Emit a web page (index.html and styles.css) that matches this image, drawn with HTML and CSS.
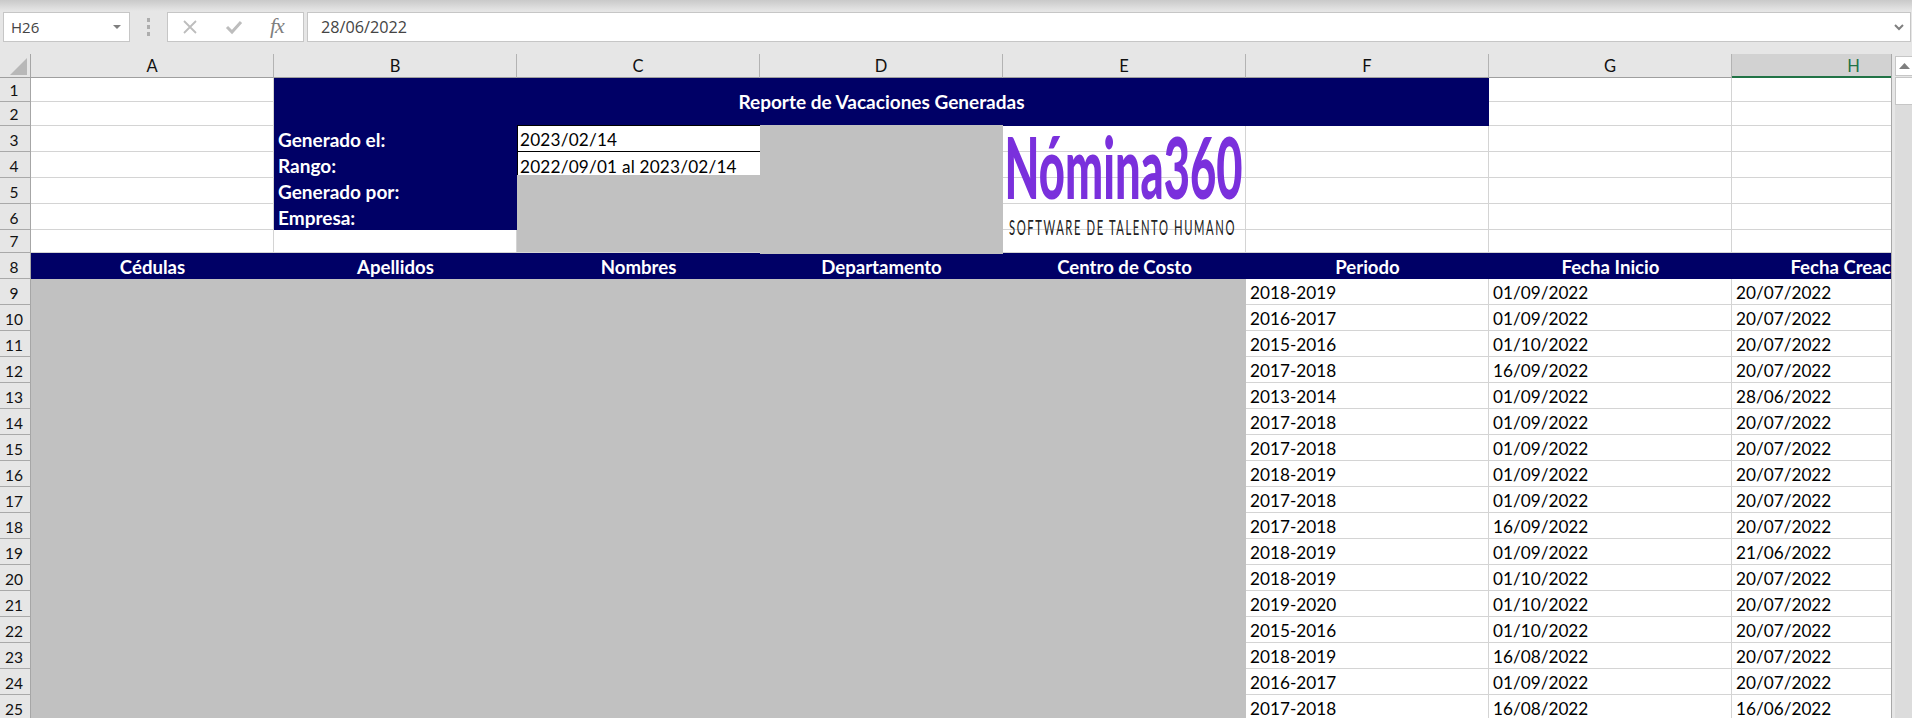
FILE: index.html
```html
<!DOCTYPE html>
<html lang="es">
<head>
<meta charset="utf-8">
<title>Reporte de Vacaciones Generadas</title>
<link rel="stylesheet" href="styles.css">
</head>
<body>
<div class="app">
  <div class="formula-bar">
    <div class="name-box"><span>H26</span>
      <svg class="caret" width="8" height="4" viewBox="0 0 8 4"><path d="M0 0h8L4 4z"/></svg>
    </div>
    <div class="grip"><i></i><i></i><i></i></div>
    <div class="fx-box">
      <svg class="ic" width="16" height="16" viewBox="0 0 16 16"><path d="M2 2l12 12M14 2L2 14"/></svg>
      <svg class="ic" width="18" height="16" viewBox="0 0 18 16"><path class="thick" d="M2 8l5 5L16 3"/></svg>
      <span class="fx">fx</span>
    </div>
    <div class="input-box"><span>28/06/2022</span>
      <svg class="chev" width="10" height="7" viewBox="0 0 10 7"><path d="M1 1l4 4 4-4"/></svg>
    </div>
  </div>
  <div class="workspace">
    <div class="viewport">
      <div class="sheet">
        <div class="corner"><svg width="17" height="17" viewBox="0 0 17 17"><path d="M17 0v17H0z"/></svg></div>
        <div class="ch">A</div><div class="ch">B</div><div class="ch">C</div><div class="ch">D</div><div class="ch">E</div><div class="ch">F</div><div class="ch">G</div><div class="ch ch-on"><span>H</span></div>

        <div class="rh">1</div><div class="c"></div><div class="c title">Reporte de Vacaciones Generadas</div><div class="c"></div><div class="c"></div>
        <div class="rh">2</div><div class="c"></div><div class="c"></div><div class="c"></div>

        <div class="rh">3</div><div class="c"></div><div class="c label">Generado el:</div><div class="c val val-top">2023/02/14</div><div class="c"></div><div class="c"></div><div class="c"></div><div class="c"></div><div class="c"></div>
        <div class="rh">4</div><div class="c"></div><div class="c label">Rango:</div><div class="c val">2022/09/01 al 2023/02/14</div><div class="c"></div><div class="c"></div><div class="c"></div><div class="c"></div><div class="c"></div>
        <div class="rh">5</div><div class="c"></div><div class="c label">Generado por:</div><div class="c"></div><div class="c"></div><div class="c"></div><div class="c"></div><div class="c"></div><div class="c"></div>
        <div class="rh">6</div><div class="c"></div><div class="c label">Empresa:</div><div class="c"></div><div class="c"></div><div class="c"></div><div class="c"></div><div class="c"></div><div class="c"></div>
        <div class="rh">7</div><div class="c"></div><div class="c"></div><div class="c"></div><div class="c"></div><div class="c"></div><div class="c"></div><div class="c"></div><div class="c"></div>

        <div class="rh">8</div><div class="th">Cédulas</div><div class="th">Apellidos</div><div class="th">Nombres</div><div class="th">Departamento</div><div class="th">Centro de Costo</div><div class="th">Periodo</div><div class="th">Fecha Inicio</div><div class="th">Fecha Creación</div>

        <div class="rh">9</div><div class="redacted-main"></div><div class="c d">2018-2019</div><div class="c d">01/09/2022</div><div class="c d">20/07/2022</div>
        <div class="rh">10</div><div class="c d">2016-2017</div><div class="c d">01/09/2022</div><div class="c d">20/07/2022</div>
        <div class="rh">11</div><div class="c d">2015-2016</div><div class="c d">01/10/2022</div><div class="c d">20/07/2022</div>
        <div class="rh">12</div><div class="c d">2017-2018</div><div class="c d">16/09/2022</div><div class="c d">20/07/2022</div>
        <div class="rh">13</div><div class="c d">2013-2014</div><div class="c d">01/09/2022</div><div class="c d">28/06/2022</div>
        <div class="rh">14</div><div class="c d">2017-2018</div><div class="c d">01/09/2022</div><div class="c d">20/07/2022</div>
        <div class="rh">15</div><div class="c d">2017-2018</div><div class="c d">01/09/2022</div><div class="c d">20/07/2022</div>
        <div class="rh">16</div><div class="c d">2018-2019</div><div class="c d">01/09/2022</div><div class="c d">20/07/2022</div>
        <div class="rh">17</div><div class="c d">2017-2018</div><div class="c d">01/09/2022</div><div class="c d">20/07/2022</div>
        <div class="rh">18</div><div class="c d">2017-2018</div><div class="c d">16/09/2022</div><div class="c d">20/07/2022</div>
        <div class="rh">19</div><div class="c d">2018-2019</div><div class="c d">01/09/2022</div><div class="c d">21/06/2022</div>
        <div class="rh">20</div><div class="c d">2018-2019</div><div class="c d">01/10/2022</div><div class="c d">20/07/2022</div>
        <div class="rh">21</div><div class="c d">2019-2020</div><div class="c d">01/10/2022</div><div class="c d">20/07/2022</div>
        <div class="rh">22</div><div class="c d">2015-2016</div><div class="c d">01/10/2022</div><div class="c d">20/07/2022</div>
        <div class="rh">23</div><div class="c d">2018-2019</div><div class="c d">16/08/2022</div><div class="c d">20/07/2022</div>
        <div class="rh">24</div><div class="c d">2016-2017</div><div class="c d">01/09/2022</div><div class="c d">20/07/2022</div>
        <div class="rh">25</div><div class="c d">2017-2018</div><div class="c d">16/08/2022</div><div class="c d">16/06/2022</div>

        <div class="redact-c"></div>
        <div class="redact-d"></div>
        <svg class="logo" width="243" height="127" viewBox="0 0 243 127">
          <text class="logo-main" x="1.5" y="73" textLength="238" lengthAdjust="spacingAndGlyphs">Nómina360</text>
          <text class="logo-sub" x="6" y="109" textLength="227" lengthAdjust="spacingAndGlyphs">SOFTWARE DE TALENTO HUMANO</text>
        </svg>
      </div>
    </div>
    <div class="scrollbar">
      <div class="sb-top"></div>
      <div class="sb-btn"><svg width="11" height="6" viewBox="0 0 11 6"><path d="M5.500 0L11 6H0z"/></svg></div>
      <div class="sb-thumb"></div>
      <div class="sb-track"></div>
    </div>
  </div>
</div>
</body>
</html>
```

FILE: styles.css
```css
* { box-sizing: border-box; }
html, body { margin: 0; padding: 0; height: 100%; overflow: hidden; background: #e6e6e6; }
.app { width: 1912px; height: 718px; display: flex; flex-direction: column; overflow: hidden; font-family: Lato, "Liberation Sans", sans-serif; color: #000; }

.formula-bar { height: 54px; flex: none; display: flex; align-items: flex-start; padding: 12px 1px 0 3px; background: linear-gradient(#c9c9c9 0, #e6e6e6 11px); font-family: "Open Sans", "Liberation Sans", sans-serif; color: #444; }
.name-box, .fx-box, .input-box { height: 30px; background: #fff; border: 1px solid #c6c6c6; display: flex; align-items: center; }
.name-box { width: 127px; padding: 0 8px 0 7px; font-size: 15px; justify-content: space-between; }
.caret path { fill: #7f7f7f; }
.grip { width: 37px; height: 30px; display: flex; flex-direction: column; align-items: center; justify-content: center; gap: 3px; }
.grip i { width: 3px; height: 4px; background: #adadad; display: block; }
.fx-box { width: 137px; padding: 0 0 0 14px; gap: 27px; }
.ic path { fill: none; stroke: #bdbdbd; stroke-width: 1.8; }
.ic path.thick { stroke-width: 3; }
.fx { font: italic 22px "Liberation Serif", serif; color: #7f7f7f; letter-spacing: -1px; margin-top: -2px; }
.input-box { flex: 1; margin-left: 3px; padding: 0 6px 0 13px; font-size: 16.2px; justify-content: space-between; }
.chev path { fill: none; stroke: #7f7f7f; stroke-width: 2; }

.workspace { flex: 1; display: flex; min-height: 0; }
.viewport { width: 1892px; flex: none; overflow: hidden; border-right: 1px solid #a8a8a8; background: #fff; }
.sheet { position: relative; display: grid; width: 1975px; grid-template-columns: 31px repeat(8, 243px); grid-template-rows: 24px 24px 24px 26px 26px 26px 26px 23px 26px; grid-auto-rows: 26px; font-size: 17.2px; }

.corner { background: #e6e6e6; border-right: 1.5px solid #a6a6a6; border-bottom: 1.5px solid #9f9f9f; display: flex; align-items: flex-end; justify-content: flex-end; padding: 0 3px 2px 0; }
.corner svg { display: block; }
.corner path { fill: #b8b8b8; }
.ch { background: #e6e6e6; border-right: 1px solid #b3b3b3; border-bottom: 1.5px solid #9f9f9f; display: flex; align-items: center; justify-content: center; font-size: 16.5px; color: #111; padding-top: 1px; }
.ch-on { background: #d2d2d2; border-right: 0; border-bottom: 2px solid #217346; color: #217346; }
.rh { grid-column: 1; background: #e6e6e6; border-right: 1.5px solid #a6a6a6; border-bottom: 1px solid #a9a9a9; display: flex; align-items: flex-end; justify-content: center; font-size: 15.5px; line-height: 22px; color: #111; padding-right: 2px; }

.c { background: #fff; border-right: 1px solid #d4d4d4; border-bottom: 1px solid #d4d4d4; padding: 0 0 0 4px; white-space: nowrap; display: flex; align-items: flex-end; line-height: 25px; color: #000; }
.d { line-height: 22px; }
.title { grid-column: span 5; grid-row: span 2; background: #000066; border: 0; color: #fff; font-weight: 700; font-size: 19px; align-items: center; justify-content: center; padding: 0 0 2px; }
.label { background: #000066; border: 0; color: #fff; font-weight: 700; font-size: 19px; }
.val { border-right: 0; border-bottom: 0; padding-bottom: 0; line-height: 23px; border-left: 1px solid #000; padding-left: 2px; letter-spacing: 0.2px; }
.val-top { border-top: 1px solid #000; border-bottom: 1px solid #000; margin-top: -1px; }
.th { background: #000066; color: #fff; font-weight: 700; font-size: 18.6px; display: flex; align-items: center; justify-content: center; white-space: nowrap; padding-top: 2px; }
.redacted-main { grid-column: span 5; grid-row: span 17; background: #c1c1c1; }

.redact-c { position: absolute; left: 517px; top: 121px; width: 243px; height: 77px; background: #c1c1c1; }
.redact-d { position: absolute; left: 760px; top: 71px; width: 243px; height: 129px; background: #c1c1c1; }
.logo { position: absolute; left: 1003px; top: 72px; overflow: visible; }
.logo-main { font-family: Lato, sans-serif; font-weight: 900; font-size: 86px; fill: #7a30dc; }
.logo-sub { font-family: Lato, sans-serif; font-weight: 400; font-size: 21px; letter-spacing: 3px; fill: #222; }

.scrollbar { flex: 1; display: flex; flex-direction: column; align-items: flex-end; }
.sb-top { height: 2px; width: 100%; flex: none; }
.sb-btn { width: 17px; height: 20px; flex: none; background: #fff; border: 1px solid #c6c6c6; border-right: 0; display: flex; align-items: center; justify-content: center; }
.sb-btn path { fill: #7f7f7f; }
.sb-thumb { width: 17px; height: 28px; flex: none; margin-top: 1px; background: #fff; border: 1px solid #c6c6c6; border-right: 0; }
.sb-track { width: 17px; flex: 1; background: #dcdcdc; }
```
